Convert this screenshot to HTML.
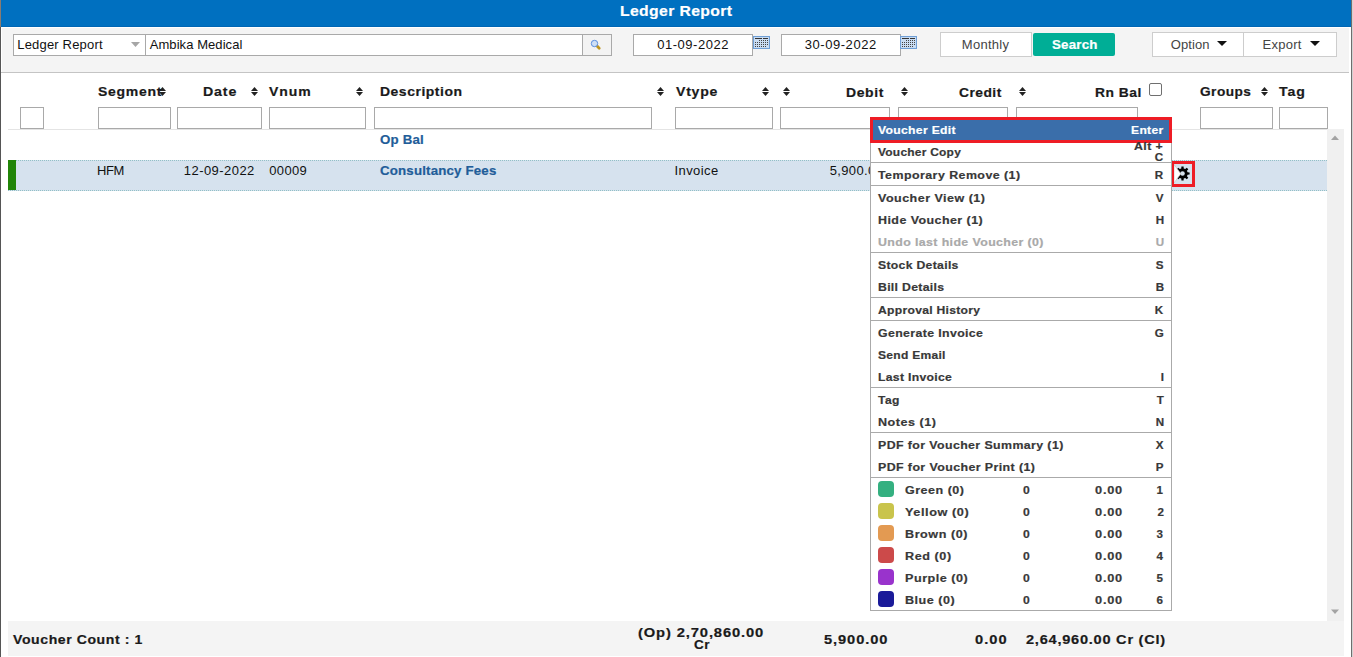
<!DOCTYPE html>
<html><head><meta charset="utf-8">
<style>
html,body{margin:0;padding:0;}
body{width:1353px;height:657px;overflow:hidden;position:relative;background:#fff;font-family:"Liberation Sans",sans-serif;}
.a{position:absolute;box-sizing:border-box;}
.t{position:absolute;white-space:pre;font-family:"Liberation Sans",sans-serif;}
.inp{position:absolute;box-sizing:border-box;border:1px solid #a9a9a9;background:#fff;}
.btn{position:absolute;box-sizing:border-box;border:1px solid #cdcdcd;background:#fff;}
.sort{position:absolute;width:7px;height:10px;}
.sep{position:absolute;left:870px;width:302px;height:1px;background:#aaaaaa;}
.sw{position:absolute;left:878px;width:16px;height:16px;border-radius:4px;}
</style></head><body>
<!-- header -->
<div class="a" style="left:0;top:0;width:1351px;height:27px;background:#0070c0;"></div>
<div class="a" style="left:0;top:26px;width:1351px;height:1px;background:#0066b4;"></div>
<div class="a" style="left:0;top:0;width:1px;height:27px;background:#8a7b70;"></div>
<div class="a" style="left:0;top:27px;width:1px;height:630px;background:#555;"></div>
<div class="a" style="left:1351px;top:0;width:1px;height:657px;background:#6e6e6e;"></div>
<div class="a" style="left:1352px;top:0;width:1px;height:657px;background:#d2d2d2;"></div>
<!-- toolbar -->
<div class="a" style="left:2px;top:28px;width:1347px;height:44px;background:#f4f4f4;"></div>
<div class="a" style="left:1px;top:72px;width:1348px;height:1px;background:#c4c4c4;"></div>
<div class="inp" style="left:13px;top:34px;width:133px;height:22px;"></div>
<svg class="a" style="left:131px;top:42px" width="10" height="6"><polygon points="0,0 9,0 4.5,5" fill="#a6a6a6"/></svg>
<div class="inp" style="left:145px;top:34px;width:438px;height:22px;"></div>
<div class="inp" style="left:582px;top:34px;width:30px;height:22px;background:#f3f3f3;"></div>
<svg class="a" style="left:589px;top:38px" width="14" height="14">
 <line x1="7.6" y1="7.6" x2="10.2" y2="10.2" stroke="#bf9520" stroke-width="2.8" stroke-linecap="round"/>
 <circle cx="5.5" cy="5.5" r="3.2" fill="#cfe0f6" stroke="#5b8fe0" stroke-width="1"/>
</svg>
<div class="inp" style="left:633px;top:34px;width:120px;height:22px;"></div>
<svg class="a" style="left:753px;top:36px" width="17" height="13">
 <rect x="0.5" y="0.5" width="16" height="12" fill="#c9dcf2" stroke="#6f9fd6"/>
 <rect x="2" y="2" width="7" height="1" fill="#333"/><rect x="10" y="2" width="5" height="1" fill="#333"/>
 <g fill="#444"><rect x="6" y="4" width="1" height="1"/><rect x="8" y="4" width="1" height="1"/><rect x="10" y="4" width="1" height="1"/><rect x="12" y="4" width="1" height="1"/><rect x="14" y="4" width="1" height="1"/><rect x="2" y="6" width="1" height="1"/><rect x="4" y="6" width="1" height="1"/><rect x="6" y="6" width="1" height="1"/><rect x="8" y="6" width="1" height="1"/><rect x="10" y="6" width="1" height="1"/><rect x="12" y="6" width="1" height="1"/><rect x="14" y="6" width="1" height="1"/><rect x="2" y="8" width="1" height="1"/><rect x="4" y="8" width="1" height="1"/><rect x="6" y="8" width="1" height="1"/><rect x="8" y="8" width="1" height="1"/><rect x="10" y="8" width="1" height="1"/><rect x="12" y="8" width="1" height="1"/><rect x="14" y="8" width="1" height="1"/><rect x="2" y="10" width="1" height="1"/><rect x="4" y="10" width="1" height="1"/><rect x="6" y="10" width="1" height="1"/><rect x="8" y="10" width="1" height="1"/><rect x="10" y="10" width="1" height="1"/><rect x="12" y="10" width="1" height="1"/></g></svg>
<div class="inp" style="left:781px;top:34px;width:120px;height:22px;"></div>
<svg class="a" style="left:900px;top:36px" width="17" height="13">
 <rect x="0.5" y="0.5" width="16" height="12" fill="#c9dcf2" stroke="#6f9fd6"/>
 <rect x="2" y="2" width="7" height="1" fill="#333"/><rect x="10" y="2" width="5" height="1" fill="#333"/>
 <g fill="#444"><rect x="6" y="4" width="1" height="1"/><rect x="8" y="4" width="1" height="1"/><rect x="10" y="4" width="1" height="1"/><rect x="12" y="4" width="1" height="1"/><rect x="14" y="4" width="1" height="1"/><rect x="2" y="6" width="1" height="1"/><rect x="4" y="6" width="1" height="1"/><rect x="6" y="6" width="1" height="1"/><rect x="8" y="6" width="1" height="1"/><rect x="10" y="6" width="1" height="1"/><rect x="12" y="6" width="1" height="1"/><rect x="14" y="6" width="1" height="1"/><rect x="2" y="8" width="1" height="1"/><rect x="4" y="8" width="1" height="1"/><rect x="6" y="8" width="1" height="1"/><rect x="8" y="8" width="1" height="1"/><rect x="10" y="8" width="1" height="1"/><rect x="12" y="8" width="1" height="1"/><rect x="14" y="8" width="1" height="1"/><rect x="2" y="10" width="1" height="1"/><rect x="4" y="10" width="1" height="1"/><rect x="6" y="10" width="1" height="1"/><rect x="8" y="10" width="1" height="1"/><rect x="10" y="10" width="1" height="1"/><rect x="12" y="10" width="1" height="1"/></g></svg>
<div class="btn" style="left:940px;top:32px;width:92px;height:25px;"></div>
<div class="a" style="left:1033px;top:33px;width:82px;height:23px;background:#00ae96;border-radius:2px;"></div>
<div class="btn" style="left:1152px;top:32px;width:92px;height:25px;"></div>
<div class="btn" style="left:1243px;top:32px;width:94px;height:25px;"></div>
<svg class="a" style="left:1217px;top:41px" width="11" height="6"><polygon points="0,0 10,0 5,5" fill="#111"/></svg>
<svg class="a" style="left:1310px;top:41px" width="11" height="6"><polygon points="0,0 10,0 5,5" fill="#111"/></svg>
<!-- table header sort icons -->
<svg class="sort" style="left:159px;top:87px" width="7" height="10"><polygon points="0,4 7,4 3.5,0" fill="#222"/><polygon points="0,5 7,5 3.5,9" fill="#222"/></svg>
<svg class="sort" style="left:251px;top:87px" width="7" height="10"><polygon points="0,4 7,4 3.5,0" fill="#222"/><polygon points="0,5 7,5 3.5,9" fill="#222"/></svg>
<svg class="sort" style="left:356px;top:87px" width="7" height="10"><polygon points="0,4 7,4 3.5,0" fill="#222"/><polygon points="0,5 7,5 3.5,9" fill="#222"/></svg>
<svg class="sort" style="left:657px;top:87px" width="7" height="10"><polygon points="0,4 7,4 3.5,0" fill="#222"/><polygon points="0,5 7,5 3.5,9" fill="#222"/></svg>
<svg class="sort" style="left:762px;top:87px" width="7" height="10"><polygon points="0,4 7,4 3.5,0" fill="#222"/><polygon points="0,5 7,5 3.5,9" fill="#222"/></svg>
<svg class="sort" style="left:783px;top:87px" width="7" height="10"><polygon points="0,4 7,4 3.5,0" fill="#222"/><polygon points="0,5 7,5 3.5,9" fill="#222"/></svg>
<svg class="sort" style="left:901px;top:87px" width="7" height="10"><polygon points="0,4 7,4 3.5,0" fill="#222"/><polygon points="0,5 7,5 3.5,9" fill="#222"/></svg>
<svg class="sort" style="left:1019px;top:87px" width="7" height="10"><polygon points="0,4 7,4 3.5,0" fill="#222"/><polygon points="0,5 7,5 3.5,9" fill="#222"/></svg>
<svg class="sort" style="left:1261px;top:87px" width="7" height="10"><polygon points="0,4 7,4 3.5,0" fill="#222"/><polygon points="0,5 7,5 3.5,9" fill="#222"/></svg>
<div class="a" style="left:1149px;top:83px;width:13px;height:13px;border:1px solid #6f6f6f;border-radius:2px;background:#fff;"></div>
<!-- filter inputs -->
<div class="inp" style="left:20px;top:107px;width:24px;height:22px;"></div>
<div class="inp" style="left:98px;top:107px;width:73px;height:22px;"></div>
<div class="inp" style="left:177px;top:107px;width:85px;height:22px;"></div>
<div class="inp" style="left:269px;top:107px;width:97px;height:22px;"></div>
<div class="inp" style="left:374px;top:107px;width:278px;height:22px;"></div>
<div class="inp" style="left:675px;top:107px;width:98px;height:22px;"></div>
<div class="inp" style="left:780px;top:107px;width:110px;height:22px;"></div>
<div class="inp" style="left:898px;top:107px;width:110px;height:22px;"></div>
<div class="inp" style="left:1016px;top:107px;width:122px;height:22px;"></div>
<div class="inp" style="left:1200px;top:107px;width:73px;height:22px;"></div>
<div class="inp" style="left:1279px;top:107px;width:49px;height:22px;"></div>
<div class="a" style="left:8px;top:129px;width:1319px;height:1px;background:#e4e4e4;"></div>
<!-- scrollbar -->
<div class="a" style="left:1327px;top:129px;width:17px;height:492px;background:#f0f0f0;"></div>
<svg class="a" style="left:1331px;top:135px" width="9" height="6"><polygon points="0,5 8,5 4,0.5" fill="#a3a3a3"/></svg>
<svg class="a" style="left:1331px;top:609px" width="9" height="6"><polygon points="0,0.5 8,0.5 4,5" fill="#a3a3a3"/></svg>
<!-- data row -->
<div class="a" style="left:8px;top:160px;width:1319px;height:31px;background:#d6e2ee;border-top:1px dotted #92c0c6;border-bottom:1px dotted #92c0c6;"></div>
<div class="a" style="left:8px;top:160px;width:8px;height:30px;background:#218508;"></div>
<!-- footer -->
<div class="a" style="left:8px;top:621px;width:1336px;height:35px;background:#f4f4f4;"></div>
<span class="t" style="left:619.75px;top:3.30px;font-size:15px;line-height:15px;font-weight:bold;color:#ffffff;letter-spacing:0.378px;transform:scaleX(1.0467);transform-origin:0 0;-webkit-text-stroke:0.2px #ffffff;">Ledger Report</span>
<span class="t" style="left:17.30px;top:38.20px;font-size:13px;line-height:13px;font-weight:normal;color:#111;letter-spacing:0.175px;">Ledger Report</span>
<span class="t" style="left:149.70px;top:37.90px;font-size:13px;line-height:13px;font-weight:normal;color:#111;letter-spacing:0.072px;">Ambika Medical</span>
<span class="t" style="left:657.20px;top:37.90px;font-size:13px;line-height:13px;font-weight:normal;color:#111;letter-spacing:0.526px;">01-09-2022</span>
<span class="t" style="left:804.70px;top:37.90px;font-size:13px;line-height:13px;font-weight:normal;color:#111;letter-spacing:0.559px;">30-09-2022</span>
<span class="t" style="left:961.80px;top:37.90px;font-size:13px;line-height:13px;font-weight:normal;color:#444;letter-spacing:0.280px;">Monthly</span>
<span class="t" style="left:1051.50px;top:37.90px;font-size:13px;line-height:13px;font-weight:bold;color:#ffffff;letter-spacing:0.203px;transform:scaleX(1.0240);transform-origin:0 0;-webkit-text-stroke:0.2px #ffffff;">Search</span>
<span class="t" style="left:1170.70px;top:37.90px;font-size:13px;line-height:13px;font-weight:normal;color:#444;letter-spacing:0.106px;">Option</span>
<span class="t" style="left:1262.60px;top:37.90px;font-size:13px;line-height:13px;font-weight:normal;color:#444;letter-spacing:0.248px;">Export</span>
<span class="t" style="left:98.30px;top:84.60px;font-size:13px;line-height:13px;font-weight:bold;color:#1a1a1a;letter-spacing:0.667px;transform:scaleX(1.0776);transform-origin:0 0;-webkit-text-stroke:0.2px #1a1a1a;">Segment</span>
<span class="t" style="left:203.40px;top:84.60px;font-size:13px;line-height:13px;font-weight:bold;color:#1a1a1a;letter-spacing:0.786px;transform:scaleX(1.0922);transform-origin:0 0;-webkit-text-stroke:0.2px #1a1a1a;">Date</span>
<span class="t" style="left:269.30px;top:84.60px;font-size:13px;line-height:13px;font-weight:bold;color:#1a1a1a;letter-spacing:0.843px;transform:scaleX(1.0766);transform-origin:0 0;-webkit-text-stroke:0.2px #1a1a1a;">Vnum</span>
<span class="t" style="left:380.40px;top:84.60px;font-size:13px;line-height:13px;font-weight:bold;color:#1a1a1a;letter-spacing:0.486px;transform:scaleX(1.0729);transform-origin:0 0;-webkit-text-stroke:0.2px #1a1a1a;">Description</span>
<span class="t" style="left:675.50px;top:84.60px;font-size:13px;line-height:13px;font-weight:bold;color:#1a1a1a;letter-spacing:0.684px;transform:scaleX(1.0843);transform-origin:0 0;-webkit-text-stroke:0.2px #1a1a1a;">Vtype</span>
<span class="t" style="left:846.20px;top:85.60px;font-size:13px;line-height:13px;font-weight:bold;color:#1a1a1a;letter-spacing:0.574px;transform:scaleX(1.0743);transform-origin:0 0;-webkit-text-stroke:0.2px #1a1a1a;">Debit</span>
<span class="t" style="left:959.00px;top:85.60px;font-size:13px;line-height:13px;font-weight:bold;color:#1a1a1a;letter-spacing:0.449px;transform:scaleX(1.0624);transform-origin:0 0;-webkit-text-stroke:0.2px #1a1a1a;">Credit</span>
<span class="t" style="left:1095.20px;top:85.60px;font-size:13px;line-height:13px;font-weight:bold;color:#1a1a1a;letter-spacing:0.475px;transform:scaleX(1.0621);transform-origin:0 0;-webkit-text-stroke:0.2px #1a1a1a;">Rn Bal</span>
<span class="t" style="left:1200.20px;top:84.60px;font-size:13px;line-height:13px;font-weight:bold;color:#1a1a1a;letter-spacing:0.448px;transform:scaleX(1.0512);transform-origin:0 0;-webkit-text-stroke:0.2px #1a1a1a;">Groups</span>
<span class="t" style="left:1279.00px;top:84.60px;font-size:13px;line-height:13px;font-weight:bold;color:#1a1a1a;letter-spacing:0.853px;transform:scaleX(1.0832);transform-origin:0 0;-webkit-text-stroke:0.2px #1a1a1a;">Tag</span>
<span class="t" style="left:380.40px;top:132.90px;font-size:13px;line-height:13px;font-weight:bold;color:#1f5d99;letter-spacing:0.178px;transform:scaleX(1.0220);transform-origin:0 0;-webkit-text-stroke:0.2px #1f5d99;">Op Bal</span>
<span class="t" style="left:97.00px;top:164.10px;font-size:13px;line-height:13px;font-weight:normal;color:#111;letter-spacing:-0.365px;">HFM</span>
<span class="t" style="left:183.80px;top:164.10px;font-size:13px;line-height:13px;font-weight:normal;color:#111;letter-spacing:0.448px;">12-09-2022</span>
<span class="t" style="left:269.30px;top:164.10px;font-size:13px;line-height:13px;font-weight:normal;color:#111;letter-spacing:0.345px;">00009</span>
<span class="t" style="left:380.40px;top:164.10px;font-size:13px;line-height:13px;font-weight:bold;color:#1f5d99;letter-spacing:0.165px;transform:scaleX(1.0229);transform-origin:0 0;-webkit-text-stroke:0.2px #1f5d99;">Consultancy Fees</span>
<span class="t" style="left:674.50px;top:164.10px;font-size:13px;line-height:13px;font-weight:normal;color:#111;letter-spacing:0.407px;">Invoice</span>
<span class="t" style="left:829.80px;top:164.10px;font-size:13px;line-height:13px;font-weight:normal;color:#111;letter-spacing:0.332px;">5,900.00</span>
<!-- gear -->
<div class="a" style="left:1171px;top:161px;width:24px;height:26px;border:3px solid #ee1c25;background:#d6e2ee;"></div>
<svg class="a" style="left:1174px;top:164px" width="18" height="20">
 <polygon points="13.55,8.28 15.62,8.42 15.62,10.58 13.55,10.72 12.94,12.21 14.30,13.77 12.77,15.30 11.21,13.94 9.72,14.55 9.58,16.62 7.42,16.62 7.28,14.55 5.79,13.94 4.23,15.30 2.70,13.77 4.06,12.21 3.45,10.72 1.38,10.58 1.38,8.42 3.45,8.28 4.06,6.79 2.70,5.23 4.23,3.70 5.79,5.06 7.28,4.45 7.42,2.38 9.58,2.38 9.72,4.45 11.21,5.06 12.77,3.70 14.30,5.23 12.94,6.79" fill="#000"/><circle cx="8.5" cy="9.5" r="2.3" fill="#d6e2ee"/>
 <polygon points="0,0.5 6.8,9.7 0,19" fill="#fff" stroke="#c4c4c4" stroke-width="0.7"/>
</svg>
<!-- menu -->
<div class="a" style="left:870px;top:117px;width:302px;height:494px;background:#fff;border:1px solid #aaaaaa;"></div>
<div class="a" style="left:870px;top:117px;width:302px;height:26px;background:#3a6eaa;border:3px solid #ee1c25;"></div>
<div class="sep" style="top:162px"></div>
<div class="sep" style="top:185px"></div>
<div class="sep" style="top:252px"></div>
<div class="sep" style="top:297px"></div>
<div class="sep" style="top:320px"></div>
<div class="sep" style="top:387px"></div>
<div class="sep" style="top:432px"></div>
<div class="sep" style="top:477px"></div>
<div class="sw" style="top:481px;background:#34b080;"></div>
<div class="sw" style="top:503px;background:#c9c44c;"></div>
<div class="sw" style="top:525px;background:#e39a52;"></div>
<div class="sw" style="top:547px;background:#cc4a4a;"></div>
<div class="sw" style="top:569px;background:#9933cc;"></div>
<div class="sw" style="top:591px;background:#1a1a99;"></div>
<span class="t" style="left:878.20px;top:124.28px;font-size:11.6px;line-height:11.6px;font-weight:bold;color:#ffffff;letter-spacing:0.300px;transform:scaleX(1.0489);transform-origin:0 0;-webkit-text-stroke:0.2px #ffffff;">Voucher Edit</span>
<span class="t" style="left:878.20px;top:145.98px;font-size:11.6px;line-height:11.6px;font-weight:bold;color:#383838;letter-spacing:0.225px;transform:scaleX(1.0327);transform-origin:0 0;-webkit-text-stroke:0.2px #383838;">Voucher Copy</span>
<span class="t" style="left:878.20px;top:168.88px;font-size:11.6px;line-height:11.6px;font-weight:bold;color:#383838;letter-spacing:0.425px;transform:scaleX(1.0692);transform-origin:0 0;-webkit-text-stroke:0.2px #383838;">Temporary Remove (1)</span>
<span class="t" style="left:878.20px;top:191.68px;font-size:11.6px;line-height:11.6px;font-weight:bold;color:#383838;letter-spacing:0.451px;transform:scaleX(1.0790);transform-origin:0 0;-webkit-text-stroke:0.2px #383838;">Voucher View (1)</span>
<span class="t" style="left:878.20px;top:213.78px;font-size:11.6px;line-height:11.6px;font-weight:bold;color:#383838;letter-spacing:0.416px;transform:scaleX(1.0733);transform-origin:0 0;-webkit-text-stroke:0.2px #383838;">Hide Voucher (1)</span>
<span class="t" style="left:878.20px;top:236.18px;font-size:11.6px;line-height:11.6px;font-weight:bold;color:#a9a9a9;letter-spacing:0.365px;transform:scaleX(1.0666);transform-origin:0 0;-webkit-text-stroke:0.2px #a9a9a9;">Undo last hide Voucher (0)</span>
<span class="t" style="left:878.20px;top:258.98px;font-size:11.6px;line-height:11.6px;font-weight:bold;color:#383838;letter-spacing:0.298px;transform:scaleX(1.0521);transform-origin:0 0;-webkit-text-stroke:0.2px #383838;">Stock Details</span>
<span class="t" style="left:878.20px;top:281.08px;font-size:11.6px;line-height:11.6px;font-weight:bold;color:#383838;letter-spacing:0.287px;transform:scaleX(1.0567);transform-origin:0 0;-webkit-text-stroke:0.2px #383838;">Bill Details</span>
<span class="t" style="left:878.20px;top:303.98px;font-size:11.6px;line-height:11.6px;font-weight:bold;color:#383838;letter-spacing:0.275px;transform:scaleX(1.0460);transform-origin:0 0;-webkit-text-stroke:0.2px #383838;">Approval History</span>
<span class="t" style="left:878.20px;top:326.98px;font-size:11.6px;line-height:11.6px;font-weight:bold;color:#383838;letter-spacing:0.362px;transform:scaleX(1.0612);transform-origin:0 0;-webkit-text-stroke:0.2px #383838;">Generate Invoice</span>
<span class="t" style="left:878.20px;top:348.98px;font-size:11.6px;line-height:11.6px;font-weight:bold;color:#383838;letter-spacing:0.263px;transform:scaleX(1.0395);transform-origin:0 0;-webkit-text-stroke:0.2px #383838;">Send Email</span>
<span class="t" style="left:878.20px;top:370.98px;font-size:11.6px;line-height:11.6px;font-weight:bold;color:#383838;letter-spacing:0.296px;transform:scaleX(1.0506);transform-origin:0 0;-webkit-text-stroke:0.2px #383838;">Last Invoice</span>
<span class="t" style="left:878.20px;top:393.98px;font-size:11.6px;line-height:11.6px;font-weight:bold;color:#383838;letter-spacing:0.415px;transform:scaleX(1.0440);transform-origin:0 0;-webkit-text-stroke:0.2px #383838;">Tag</span>
<span class="t" style="left:878.20px;top:415.98px;font-size:11.6px;line-height:11.6px;font-weight:bold;color:#383838;letter-spacing:0.482px;transform:scaleX(1.0840);transform-origin:0 0;-webkit-text-stroke:0.2px #383838;">Notes (1)</span>
<span class="t" style="left:878.20px;top:438.98px;font-size:11.6px;line-height:11.6px;font-weight:bold;color:#383838;letter-spacing:0.383px;transform:scaleX(1.0646);transform-origin:0 0;-webkit-text-stroke:0.2px #383838;">PDF for Voucher Summary (1)</span>
<span class="t" style="left:878.20px;top:460.98px;font-size:11.6px;line-height:11.6px;font-weight:bold;color:#383838;letter-spacing:0.375px;transform:scaleX(1.0698);transform-origin:0 0;-webkit-text-stroke:0.2px #383838;">PDF for Voucher Print (1)</span>
<span class="t" style="left:1130.80px;top:124.28px;font-size:11.6px;line-height:11.6px;font-weight:bold;color:#ffffff;letter-spacing:0.309px;transform:scaleX(1.0428);transform-origin:0 0;-webkit-text-stroke:0.2px #ffffff;">Enter</span>
<span class="t" style="left:1133.80px;top:140.18px;font-size:11.6px;line-height:11.6px;font-weight:bold;color:#383838;letter-spacing:0.390px;transform:scaleX(1.0647);transform-origin:0 0;-webkit-text-stroke:0.2px #383838;">Alt +</span>
<span class="t" style="left:1154.80px;top:150.88px;font-size:11.6px;line-height:11.6px;font-weight:bold;color:#383838;-webkit-text-stroke:0.2px #383838;">C</span>
<span class="t" style="left:1154.80px;top:168.88px;font-size:11.6px;line-height:11.6px;font-weight:bold;color:#383838;-webkit-text-stroke:0.2px #383838;">R</span>
<span class="t" style="left:1155.80px;top:191.68px;font-size:11.6px;line-height:11.6px;font-weight:bold;color:#383838;-webkit-text-stroke:0.2px #383838;">V</span>
<span class="t" style="left:1155.80px;top:213.78px;font-size:11.6px;line-height:11.6px;font-weight:bold;color:#383838;-webkit-text-stroke:0.2px #383838;">H</span>
<span class="t" style="left:1155.80px;top:236.18px;font-size:11.6px;line-height:11.6px;font-weight:bold;color:#a9a9a9;-webkit-text-stroke:0.2px #a9a9a9;">U</span>
<span class="t" style="left:1155.80px;top:258.98px;font-size:11.6px;line-height:11.6px;font-weight:bold;color:#383838;-webkit-text-stroke:0.2px #383838;">S</span>
<span class="t" style="left:1155.80px;top:281.08px;font-size:11.6px;line-height:11.6px;font-weight:bold;color:#383838;-webkit-text-stroke:0.2px #383838;">B</span>
<span class="t" style="left:1154.80px;top:303.98px;font-size:11.6px;line-height:11.6px;font-weight:bold;color:#383838;-webkit-text-stroke:0.2px #383838;">K</span>
<span class="t" style="left:1154.80px;top:326.98px;font-size:11.6px;line-height:11.6px;font-weight:bold;color:#383838;-webkit-text-stroke:0.2px #383838;">G</span>
<span class="t" style="left:1160.80px;top:370.98px;font-size:11.6px;line-height:11.6px;font-weight:bold;color:#383838;-webkit-text-stroke:0.2px #383838;">I</span>
<span class="t" style="left:1156.80px;top:393.98px;font-size:11.6px;line-height:11.6px;font-weight:bold;color:#383838;-webkit-text-stroke:0.2px #383838;">T</span>
<span class="t" style="left:1155.80px;top:415.98px;font-size:11.6px;line-height:11.6px;font-weight:bold;color:#383838;-webkit-text-stroke:0.2px #383838;">N</span>
<span class="t" style="left:1155.80px;top:438.98px;font-size:11.6px;line-height:11.6px;font-weight:bold;color:#383838;-webkit-text-stroke:0.2px #383838;">X</span>
<span class="t" style="left:1155.80px;top:460.98px;font-size:11.6px;line-height:11.6px;font-weight:bold;color:#383838;-webkit-text-stroke:0.2px #383838;">P</span>
<span class="t" style="left:904.70px;top:483.98px;font-size:11.6px;line-height:11.6px;font-weight:bold;color:#383838;letter-spacing:0.467px;transform:scaleX(1.0790);transform-origin:0 0;-webkit-text-stroke:0.2px #383838;">Green (0)</span>
<span class="t" style="left:1022.70px;top:483.98px;font-size:11.6px;line-height:11.6px;font-weight:bold;color:#383838;letter-spacing:0.286px;transform:scaleX(1.0500);transform-origin:0 0;-webkit-text-stroke:0.2px #383838;">0</span>
<span class="t" style="left:1095.30px;top:483.98px;font-size:11.6px;line-height:11.6px;font-weight:bold;color:#383838;letter-spacing:0.692px;transform:scaleX(1.1036);transform-origin:0 0;-webkit-text-stroke:0.2px #383838;">0.00</span>
<span class="t" style="left:1156.40px;top:483.98px;font-size:11.6px;line-height:11.6px;font-weight:bold;color:#383838;-webkit-text-stroke:0.2px #383838;">1</span>
<span class="t" style="left:904.70px;top:505.98px;font-size:11.6px;line-height:11.6px;font-weight:bold;color:#383838;letter-spacing:0.521px;transform:scaleX(1.0959);transform-origin:0 0;-webkit-text-stroke:0.2px #383838;">Yellow (0)</span>
<span class="t" style="left:1022.70px;top:505.98px;font-size:11.6px;line-height:11.6px;font-weight:bold;color:#383838;letter-spacing:0.286px;transform:scaleX(1.0500);transform-origin:0 0;-webkit-text-stroke:0.2px #383838;">0</span>
<span class="t" style="left:1095.30px;top:505.98px;font-size:11.6px;line-height:11.6px;font-weight:bold;color:#383838;letter-spacing:0.692px;transform:scaleX(1.1036);transform-origin:0 0;-webkit-text-stroke:0.2px #383838;">0.00</span>
<span class="t" style="left:1157.40px;top:505.98px;font-size:11.6px;line-height:11.6px;font-weight:bold;color:#383838;-webkit-text-stroke:0.2px #383838;">2</span>
<span class="t" style="left:904.70px;top:527.98px;font-size:11.6px;line-height:11.6px;font-weight:bold;color:#383838;letter-spacing:0.519px;transform:scaleX(1.0840);transform-origin:0 0;-webkit-text-stroke:0.2px #383838;">Brown (0)</span>
<span class="t" style="left:1022.70px;top:527.98px;font-size:11.6px;line-height:11.6px;font-weight:bold;color:#383838;letter-spacing:0.286px;transform:scaleX(1.0500);transform-origin:0 0;-webkit-text-stroke:0.2px #383838;">0</span>
<span class="t" style="left:1095.30px;top:527.98px;font-size:11.6px;line-height:11.6px;font-weight:bold;color:#383838;letter-spacing:0.692px;transform:scaleX(1.1036);transform-origin:0 0;-webkit-text-stroke:0.2px #383838;">0.00</span>
<span class="t" style="left:1156.40px;top:527.98px;font-size:11.6px;line-height:11.6px;font-weight:bold;color:#383838;-webkit-text-stroke:0.2px #383838;">3</span>
<span class="t" style="left:904.70px;top:549.98px;font-size:11.6px;line-height:11.6px;font-weight:bold;color:#383838;letter-spacing:0.526px;transform:scaleX(1.0871);transform-origin:0 0;-webkit-text-stroke:0.2px #383838;">Red (0)</span>
<span class="t" style="left:1022.70px;top:549.98px;font-size:11.6px;line-height:11.6px;font-weight:bold;color:#383838;letter-spacing:0.286px;transform:scaleX(1.0500);transform-origin:0 0;-webkit-text-stroke:0.2px #383838;">0</span>
<span class="t" style="left:1095.30px;top:549.98px;font-size:11.6px;line-height:11.6px;font-weight:bold;color:#383838;letter-spacing:0.692px;transform:scaleX(1.1036);transform-origin:0 0;-webkit-text-stroke:0.2px #383838;">0.00</span>
<span class="t" style="left:1156.40px;top:549.98px;font-size:11.6px;line-height:11.6px;font-weight:bold;color:#383838;-webkit-text-stroke:0.2px #383838;">4</span>
<span class="t" style="left:904.70px;top:571.98px;font-size:11.6px;line-height:11.6px;font-weight:bold;color:#383838;letter-spacing:0.475px;transform:scaleX(1.0867);transform-origin:0 0;-webkit-text-stroke:0.2px #383838;">Purple (0)</span>
<span class="t" style="left:1022.70px;top:571.98px;font-size:11.6px;line-height:11.6px;font-weight:bold;color:#383838;letter-spacing:0.286px;transform:scaleX(1.0500);transform-origin:0 0;-webkit-text-stroke:0.2px #383838;">0</span>
<span class="t" style="left:1095.30px;top:571.98px;font-size:11.6px;line-height:11.6px;font-weight:bold;color:#383838;letter-spacing:0.692px;transform:scaleX(1.1036);transform-origin:0 0;-webkit-text-stroke:0.2px #383838;">0.00</span>
<span class="t" style="left:1156.40px;top:571.98px;font-size:11.6px;line-height:11.6px;font-weight:bold;color:#383838;-webkit-text-stroke:0.2px #383838;">5</span>
<span class="t" style="left:904.70px;top:593.98px;font-size:11.6px;line-height:11.6px;font-weight:bold;color:#383838;letter-spacing:0.471px;transform:scaleX(1.0838);transform-origin:0 0;-webkit-text-stroke:0.2px #383838;">Blue (0)</span>
<span class="t" style="left:1022.70px;top:593.98px;font-size:11.6px;line-height:11.6px;font-weight:bold;color:#383838;letter-spacing:0.286px;transform:scaleX(1.0500);transform-origin:0 0;-webkit-text-stroke:0.2px #383838;">0</span>
<span class="t" style="left:1095.30px;top:593.98px;font-size:11.6px;line-height:11.6px;font-weight:bold;color:#383838;letter-spacing:0.692px;transform:scaleX(1.1036);transform-origin:0 0;-webkit-text-stroke:0.2px #383838;">0.00</span>
<span class="t" style="left:1156.40px;top:593.98px;font-size:11.6px;line-height:11.6px;font-weight:bold;color:#383838;-webkit-text-stroke:0.2px #383838;">6</span>
<span class="t" style="left:12.60px;top:632.90px;font-size:13px;line-height:13px;font-weight:bold;color:#1a1a1a;letter-spacing:0.527px;transform:scaleX(1.0824);transform-origin:0 0;-webkit-text-stroke:0.2px #1a1a1a;">Voucher Count : 1</span>
<span class="t" style="left:638.20px;top:625.90px;font-size:13px;line-height:13px;font-weight:bold;color:#1a1a1a;letter-spacing:0.772px;transform:scaleX(1.1328);transform-origin:0 0;-webkit-text-stroke:0.2px #1a1a1a;">(Op) 2,70,860.00</span>
<span class="t" style="left:693.50px;top:638.30px;font-size:13px;line-height:13px;font-weight:bold;color:#1a1a1a;letter-spacing:0.535px;transform:scaleX(1.0386);transform-origin:0 0;-webkit-text-stroke:0.2px #1a1a1a;">Cr</span>
<span class="t" style="left:824.30px;top:632.50px;font-size:13px;line-height:13px;font-weight:bold;color:#1a1a1a;letter-spacing:0.807px;transform:scaleX(1.1263);transform-origin:0 0;-webkit-text-stroke:0.2px #1a1a1a;">5,900.00</span>
<span class="t" style="left:975.00px;top:633.40px;font-size:13px;line-height:13px;font-weight:bold;color:#1a1a1a;letter-spacing:0.937px;transform:scaleX(1.1262);transform-origin:0 0;-webkit-text-stroke:0.2px #1a1a1a;">0.00</span>
<span class="t" style="left:1025.70px;top:633.40px;font-size:13px;line-height:13px;font-weight:bold;color:#1a1a1a;letter-spacing:0.672px;transform:scaleX(1.1214);transform-origin:0 0;-webkit-text-stroke:0.2px #1a1a1a;">2,64,960.00 Cr (Cl)</span>
</body></html>
